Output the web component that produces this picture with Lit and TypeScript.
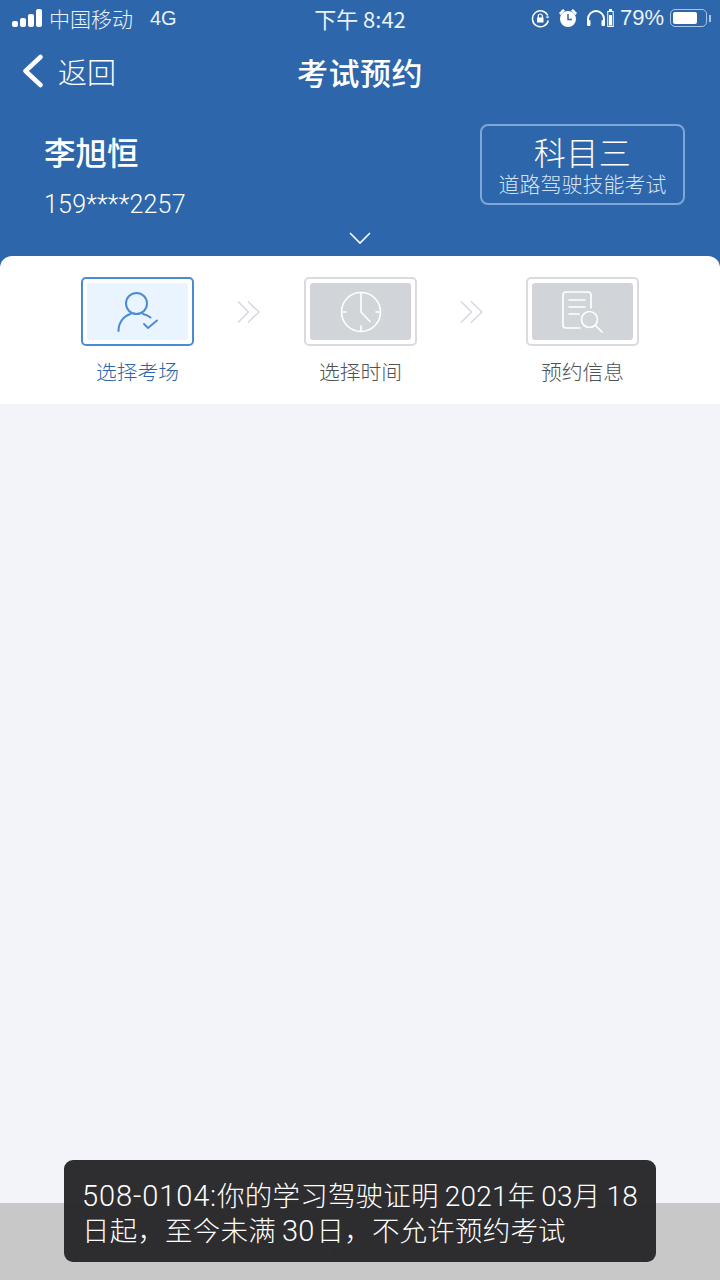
import { LitElement, html, css } from "lit";
import { customElement } from "lit/decorators.js";

const personIcon = html`<svg width="44" height="44" viewBox="0 0 44 44" fill="none" stroke="#4a8cd4" stroke-width="2" stroke-linecap="round">
  <circle cx="20.500" cy="13.500" r="10.500"></circle>
  <path d="M2.500 41c0-8.500 5-15 12-17M27 24c3 .6 5.500 1.800 7.500 3.500"></path>
  <path d="M28 34l4 4 9-7.500"></path>
</svg>`;

const clockIcon = html`<svg width="44" height="44" viewBox="0 0 44 44" fill="none" stroke="#fff" stroke-width="1.600" stroke-linecap="round">
  <circle cx="22" cy="22" r="19.500"></circle>
  <path d="M22 36v5M3 22h4M37 22h4"></path>
  <path d="M22 3v19l9 9.500"></path>
</svg>`;

const docIcon = html`<svg width="44" height="44" viewBox="0 0 44 44" fill="none" stroke="#fff" stroke-width="1.600" stroke-linecap="round">
  <path d="M19 38H5a3 3 0 0 1-3-3V5a3 3 0 0 1 3-3h22a3 3 0 0 1 3 3v13"></path>
  <path d="M8 10h16M8 17h16M8 24h10"></path>
  <circle cx="28.500" cy="29.500" r="8"></circle>
  <path d="M35 36l6 6"></path>
</svg>`;

const arrows = html`<svg width="24" height="24" viewBox="0 0 24 24" fill="none" stroke="#d5d8de" stroke-width="1.500">
  <path d="M1 1.500L11.500 12 1 22.500M11 1.500L22 12 11 22.500"></path>
</svg>`;

@customElement("app-root")
export class AppRoot extends LitElement {
  static styles = css`
    :host {
      display: block;
      font-family: "Noto Sans CJK SC", "Liberation Sans", sans-serif;
    }
    .page {
      height: 1280px;
      position: relative;
      display: flex;
      flex-direction: column;
      background: #f3f4f9;
      overflow: hidden;
    }
    .top {
      background: #2d66aa;
      color: #fff;
      height: 272px;
      flex-shrink: 0;
      box-sizing: border-box;
    }
    .status {
      height: 36px;
      display: flex;
      align-items: center;
      padding: 0 9px 0 12px;
      font-size: 21px;
      font-weight: 300;
      position: relative;
      color: #eaf2fa;
    }
    .signal {
      display: flex;
      align-items: flex-end;
      gap: 2px;
      height: 18px;
      margin-right: 7px;
    }
    .signal i {
      width: 6px;
      background: #fff;
      border-radius: 2px;
    }
    .net {
      margin-left: 17px;
      font-family: "Liberation Sans", sans-serif;
      font-size: 20px;
    }
    .clock {
      position: absolute;
      left: 0;
      right: 0;
      text-align: center;
      font-size: 22px;
      font-weight: 400;
    }
    .status-right {
      margin-left: auto;
      display: flex;
      align-items: center;
      gap: 9px;
      font-family: "Liberation Sans", sans-serif;
      font-size: 22px;
    }
    .pair {
      display: flex;
      align-items: center;
      gap: 1px;
      margin-right: -3px;
    }
    .percent {
      margin-right: -3px;
    }
    .battery {
      display: flex;
      align-items: center;
      gap: 2px;
    }
    .battery-body {
      width: 37px;
      height: 18px;
      box-sizing: border-box;
      border: 1.500px solid #a9c5e4;
      border-radius: 5px;
      padding: 2px;
    }
    .battery-body i {
      display: block;
      width: 79%;
      height: 100%;
      background: #fff;
      border-radius: 2px;
    }
    .battery-tip {
      width: 2px;
      height: 7px;
      background: #a9c5e4;
    }
    .nav {
      height: 72px;
      display: flex;
      align-items: center;
      position: relative;
      padding-left: 22px;
      font-size: 29px;
      font-weight: 300;
      margin-top: -1px;
    }
    .nav svg {
      margin-right: 14px;
    }
    .title {
      position: absolute;
      left: 0;
      right: 0;
      text-align: center;
      font-size: 31px;
      font-weight: 500;
      letter-spacing: 0.500px;
    }
    .info {
      display: flex;
      justify-content: space-between;
      padding: 17px 35px 0 44px;
    }
    .name {
      font-size: 31.500px;
      font-weight: 500;
      line-height: 44px;
      margin-top: 5px;
    }
    .phone {
      font-family: "Roboto", sans-serif;
      font-weight: 300;
      font-size: 25px;
      line-height: 30px;
      margin-top: 17px;
      letter-spacing: 0.200px;
    }
    .subject {
      width: 205px;
      height: 81px;
      box-sizing: border-box;
      border: 2px solid #7ea6d6;
      border-radius: 8px;
      padding-bottom: 2px;
      text-align: center;
      display: flex;
      flex-direction: column;
      align-items: center;
      justify-content: center;
    }
    .subject b {
      font-weight: 300;
      font-size: 32px;
      line-height: 38px;
      letter-spacing: 0.500px;
    }
    .subject span {
      font-size: 21px;
      font-weight: 300;
      line-height: 26px;
      color: #d5e3f3;
    }
    .chevron {
      display: flex;
      justify-content: center;
      margin-top: 11px;
    }
    .steps {
      background: #fff;
      margin-top: -16px;
      border-radius: 12px 12px 0 0;
      height: 148px;
      flex-shrink: 0;
      display: grid;
      grid-template-columns: 113px 110px 113px 109px 113px;
      justify-content: center;
      padding-top: 21px;
      box-sizing: border-box;
      position: relative;
    }
    .step {
      display: flex;
      flex-direction: column;
      align-items: center;
    }
    .step-box {
      width: 113px;
      height: 69px;
      box-sizing: border-box;
      border: 2px solid #d9dbde;
      border-radius: 5px;
      padding: 4px;
    }
    .step-box div {
      height: 100%;
      background: #d1d5da;
      border-radius: 3px;
      display: flex;
      align-items: center;
      justify-content: center;
    }
    .step.active .step-box {
      border-color: #4a8cd4;
    }
    .step.active .step-box div {
      background: #eaf4fe;
    }
    .step span {
      font-size: 20.800px;
      font-weight: 300;
      line-height: 30px;
      margin-top: 10px;
      color: #4e5155;
      white-space: nowrap;
    }
    .step.active span {
      color: #2d66aa;
    }
    .arrow-cell {
      display: flex;
      justify-content: center;
      padding-top: 23px;
    }
    .body {
      flex: 1;
    }
    .bottom {
      height: 77px;
      background: #c8c8c8;
      flex-shrink: 0;
      display: flex;
      justify-content: center;
      align-items: center;
      color: #fff;
      font-size: 30px;
    }
    .toast {
      position: absolute;
      left: 64px;
      top: 1160px;
      width: 592px;
      height: 102px;
      box-sizing: border-box;
      padding: 18px 10px 0 18px;
      background: rgba(42, 42, 44, 0.98);
      border-radius: 9px;
      color: #fff;
      font-size: 27.500px;
      font-weight: 300;
      line-height: 33px;
      letter-spacing: 0.200px;
      white-space: nowrap;
    }
    .toast em {
      font-style: normal;
      font-family: "Roboto", sans-serif;
      font-weight: 300;
      font-size: 28px;
      margin: 0 0 0 6px;
    }
    .toast em.first {
      margin: 0;
      font-size: 29px;
      letter-spacing: 0.900px;
    }
    .toast em.mid {
      margin: 0 2px 0 6px;
      font-size: 29px;
    }
  `;

  render() {
    return html`
      <div class="page">
        <div class="top">
          <div class="status">
            <div class="signal">
              <i style="height:6px"></i><i style="height:9px"></i><i style="height:13px"></i><i style="height:18px"></i>
            </div>
            <span>中国移动</span>
            <span class="net">4G</span>
            <span class="clock">下午 8:42</span>
            <div class="status-right">
              <svg width="19" height="19" viewBox="0 0 19 19" fill="none" stroke="#fff" stroke-width="1.500">
                <path d="M16.800 6.500A8 8 0 1 0 17.300 11.500"></path>
                <path d="M18.500 7.500l-2 2-2-2" fill="#fff" stroke="none"></path>
                <rect x="6" y="8.500" width="6.500" height="5" fill="#fff" stroke="none"></rect>
                <path d="M7.300 9V7a2 2 0 0 1 4 0v2" stroke-width="1.200"></path>
              </svg>
              <svg width="18" height="20" viewBox="0 0 18 20" fill="#fff">
                <circle cx="9" cy="11" r="8"></circle>
                <path d="M0 5l4-4 2 1.500L1.500 7zM18 5l-4-4-2 1.500L16.500 7z"></path>
                <path d="M9 6v5.500h4" fill="none" stroke="#2d66aa" stroke-width="1.500"></path>
              </svg>
              <span class="pair">
                <svg width="20" height="18" viewBox="0 0 20 18" fill="none" stroke="#fff" stroke-width="2">
                  <path d="M2 14V10a8 8 0 0 1 16 0v4"></path>
                  <rect x="1" y="11" width="3.500" height="6" rx="1" fill="#fff" stroke="none"></rect>
                  <rect x="15.500" y="11" width="3.500" height="6" rx="1" fill="#fff" stroke="none"></rect>
                </svg>
                <svg width="7" height="18" viewBox="0 0 7 18" fill="#fff">
                  <rect x="2" y="0" width="3" height="2"></rect>
                  <rect x=".75" y="2.500" width="5.500" height="15" fill="none" stroke="#fff" stroke-width="1"></rect>
                  <rect x="2" y="6" width="3" height="10.500"></rect>
                </svg>
              </span>
              <span class="percent">79%</span>
              <div class="battery">
                <div class="battery-body"><i></i></div>
                <div class="battery-tip"></div>
              </div>
            </div>
          </div>
          <div class="nav">
            <svg width="22" height="34" viewBox="0 0 22 34" fill="none" stroke="#fff" stroke-width="4.500" stroke-linecap="round" stroke-linejoin="round">
              <path d="M18.500 3L3.500 17l15 14"></path>
            </svg>
            <span>返回</span>
            <span class="title">考试预约</span>
          </div>
          <div class="info">
            <div>
              <div class="name">李旭恒</div>
              <div class="phone">159****2257</div>
            </div>
            <div class="subject">
              <b>科目三</b>
              <span>道路驾驶技能考试</span>
            </div>
          </div>
          <div class="chevron">
            <svg width="24" height="14" viewBox="0 0 24 14" fill="none" stroke="#fff" stroke-width="1.600">
              <path d="M2 2l10 10L22 2"></path>
            </svg>
          </div>
        </div>
        <div class="steps">
          <div class="step active">
            <div class="step-box"><div>${personIcon}</div></div>
            <span>选择考场</span>
          </div>
          <div class="arrow-cell">${arrows}</div>
          <div class="step">
            <div class="step-box"><div>${clockIcon}</div></div>
            <span>选择时间</span>
          </div>
          <div class="arrow-cell">${arrows}</div>
          <div class="step">
            <div class="step-box"><div>${docIcon}</div></div>
            <span>预约信息</span>
          </div>
        </div>
        <div class="body"></div>
        <div class="bottom">下一步</div>
        <div class="toast">
          <em class="first">508-0104:</em>你的学习驾驶证明<em>2021</em>年<em>03</em>月<em>18</em><br />
          日起，至今未满<em class="mid">30</em>日，不允许预约考试
        </div>
      </div>
    `;
  }
}
